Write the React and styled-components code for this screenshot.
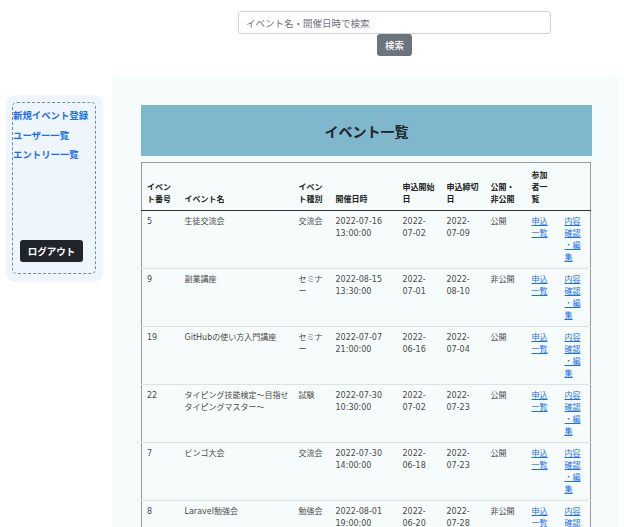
import React from "react";
import styled, { createGlobalStyle } from "styled-components";

const events = [
  { id: 5, name: "生徒交流会", type: "交流会", date: "2022-07-16 13:00:00", start: "2022-07-02", end: "2022-07-09", open: "公開" },
  { id: 9, name: "副業講座", type: "セミナー", date: "2022-08-15 13:30:00", start: "2022-07-01", end: "2022-08-10", open: "非公開" },
  { id: 19, name: "GitHubの使い方入門講座", type: "セミナー", date: "2022-07-07 21:00:00", start: "2022-06-16", end: "2022-07-04", open: "公開" },
  { id: 22, name: "タイピング技能検定〜目指せタイピングマスター〜", type: "試験", date: "2022-07-30 10:30:00", start: "2022-07-02", end: "2022-07-23", open: "公開" },
  { id: 7, name: "ビンゴ大会", type: "交流会", date: "2022-07-30 14:00:00", start: "2022-06-18", end: "2022-07-23", open: "公開" },
  { id: 8, name: "Laravel勉強会", type: "勉強会", date: "2022-08-01 19:00:00", start: "2022-06-20", end: "2022-07-28", open: "非公開" },
];

const colWidths = [38, 114, 37, 67, 44, 44, 41, 33, 31];

const App = () => {
  return (
    <>
      <GlobalStyle />
      <TopBar>
        <SearchForm>
          <SearchInput placeholder="イベント名・開催日時で検索" />
          <SearchButton>検索</SearchButton>
        </SearchForm>
      </TopBar>
      <Layout>
        <SideCol>
          <Sidebar>
            <SideInner>
              <SideLink href="#">新規イベント登録</SideLink>
              <SideLink href="#">ユーザー一覧</SideLink>
              <SideLink href="#">エントリー一覧</SideLink>
              <LogoutButton>ログアウト</LogoutButton>
            </SideInner>
          </Sidebar>
        </SideCol>
        <Main>
          <TitleBar>イベント一覧</TitleBar>
          <Table>
            <colgroup>
              {colWidths.map((w, i) => (
                <col key={i} style={{ width: w }} />
              ))}
            </colgroup>
            <thead>
              <tr>
                <Th>イベント番号</Th>
                <Th>イベント名</Th>
                <Th>イベント種別</Th>
                <Th>開催日時</Th>
                <Th>申込開始日</Th>
                <Th>申込締切日</Th>
                <Th>公開・非公開</Th>
                <Th>参加者一覧</Th>
                <Th></Th>
              </tr>
            </thead>
            <tbody>
              {events.map((e) => (
                <Row key={e.id}>
                  <Td>{e.id}</Td>
                  <Td>{e.name}</Td>
                  <Td>{e.type}</Td>
                  <Td>{e.date}</Td>
                  <Td>{e.start}</Td>
                  <Td>{e.end}</Td>
                  <Td>{e.open}</Td>
                  <Td>
                    <TableLink href="#">申込一覧</TableLink>
                  </Td>
                  <Td $loose>
                    <TableLink href="#">内容確認・編集</TableLink>
                  </Td>
                </Row>
              ))}
            </tbody>
          </Table>
        </Main>
      </Layout>
    </>
  );
};

const GlobalStyle = createGlobalStyle`
  body {
    margin: 0;
    background: #ffffff;
    font-family: "Noto Sans CJK JP", "Noto Sans", sans-serif;
    color: #212529;
  }
`;

const TopBar = styled.div`
  padding: 11px 0 0 238px;
`;

const SearchForm = styled.form`
  width: 313px;
  display: flex;
  flex-direction: column;
  align-items: center;
`;

const SearchInput = styled.input`
  box-sizing: border-box;
  width: 100%;
  height: 23px;
  border: 1px solid #ced4da;
  border-radius: 3px;
  padding: 0 7px;
  font-family: inherit;
  font-size: 9.5px;
  color: #212529;
  outline: none;

  &::placeholder {
    color: #6c757d;
  }
`;

const SearchButton = styled.button`
  height: 22px;
  padding: 0 8px;
  border: none;
  border-radius: 3px;
  background: #6c757d;
  color: #ffffff;
  font-family: inherit;
  font-size: 9.5px;
  font-weight: 500;
`;

const Layout = styled.div`
  display: flex;
  align-items: flex-start;
  margin-top: 21px;
`;

const SideCol = styled.div`
  width: 113px;
  box-sizing: border-box;
  padding: 18px 10px 0 6px;
`;

const Sidebar = styled.div`
  width: 97px;
  box-sizing: border-box;
  padding: 7px 7px 8px 6px;
  background: #eef5fd;
  border-radius: 9px;
`;

const SideInner = styled.nav`
  height: 172px;
  box-sizing: border-box;
  border: 1px dashed #6d8cae;
  border-radius: 5px;
  padding: 5px 0 0 0;
  display: flex;
  flex-direction: column;
  align-items: flex-start;
  gap: 5px;
`;

const SideLink = styled.a`
  font-size: 9.4px;
  font-weight: 700;
  line-height: 14.5px;
  color: #1a6ff0;
  text-decoration: none;
  white-space: nowrap;
`;

const LogoutButton = styled.button`
  margin: auto 0 11px 7px;
  width: 63px;
  height: 22px;
  border: none;
  border-radius: 3px;
  background: #212529;
  color: #ffffff;
  font-family: inherit;
  font-size: 9.5px;
  font-weight: 700;
`;

const Main = styled.main`
  width: 506px;
  min-height: 450px;
  box-sizing: border-box;
  padding: 28px 27px 28px 28px;
  background: #f5fcfb;
`;

const TitleBar = styled.h1`
  margin: 0 0 6px;
  height: 51px;
  display: flex;
  align-items: center;
  justify-content: center;
  background: #7fb7cd;
  font-size: 14px;
  font-weight: 700;
  color: #1e2327;
`;

const Table = styled.table`
  width: 450px;
  table-layout: fixed;
  border-collapse: collapse;
  border: 1px solid #9a9a9a;
  font-family: "DejaVu Sans", "Noto Sans CJK JP", sans-serif;
  font-size: 8px;
  line-height: 12px;
`;

const Th = styled.th`
  padding: 6px 5px 5px;
  text-align: left;
  vertical-align: bottom;
  font-family: "Noto Sans CJK JP", sans-serif;
  font-weight: 700;
  color: #222;
  border-bottom: 1.5px solid #333;
`;

const Row = styled.tr`
  border-bottom: 1px solid #dde3e2;
`;

const Td = styled.td`
  padding: 5px 5px 4px;
  vertical-align: top;
  color: #4a4a4a;
  height: 48px;
  line-break: ${({ $loose }) => ($loose ? "anywhere" : "auto")};
`;

const TableLink = styled.a`
  color: #1a6ff0;
  text-decoration: underline;
`;

export default App;
